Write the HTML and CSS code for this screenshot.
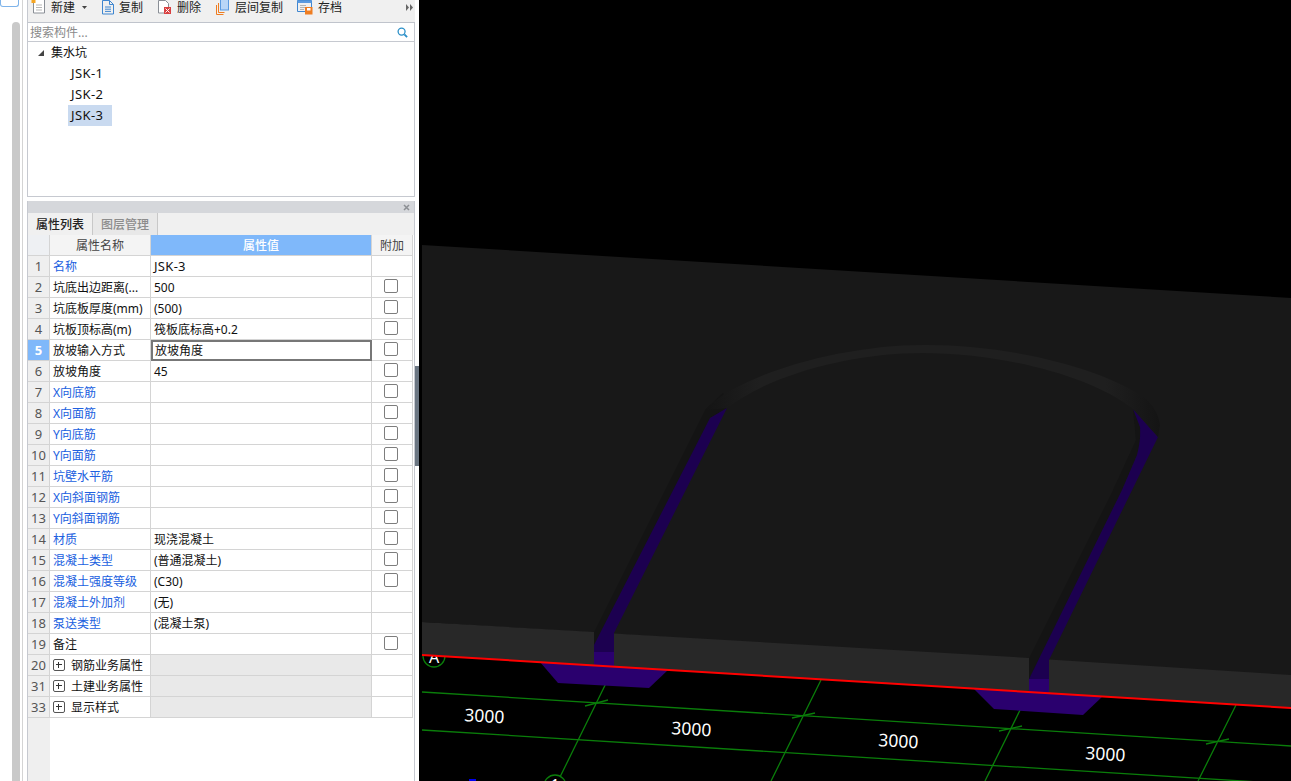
FILE: index.html
```html
<!DOCTYPE html>
<html lang="zh">
<head>
<meta charset="utf-8">
<title>集水坑</title>
<link rel="stylesheet" href="styles.css">
</head>
<body>
<div class="app">
  <aside class="strip">
    <div class="strip-inner">
      <div class="strip-btn"></div>
      <div class="strip-thumb"></div>
    </div>
  </aside>
  <section class="side">
    <div class="toolbar">
      <div class="tool tool-new">
        <svg class="ico" viewBox="0 0 16 16"><path class="s-gray" d="M2.500 -2h9l2 2v13h-11z"/><path class="s-lgray" d="M5 5h6M5 7.500h6M5 10h6"/><rect class="f-orange" x="0.500" y="-1" width="4" height="4"/></svg>
        <span>新建</span>
        <svg class="caret" viewBox="0 0 5 3"><path class="f-dark" d="M0 0h5L2.500 3z"/></svg>
      </div>
      <div class="tool tool-copy">
        <svg class="ico" viewBox="0 0 16 16"><path class="s-blue" d="M2.500 0.500h7l4 4v9.500h-11z"/><path class="s-blue" d="M9.500 0.500v4h4M5 7h6M5 9.200h6M5 11.400h6"/></svg>
        <span>复制</span>
      </div>
      <div class="tool tool-del">
        <svg class="ico" viewBox="0 0 16 16"><path class="s-gray" d="M2.500 0.500h7l3 3v9.500h-10z"/><rect class="f-red" x="8" y="7" width="7" height="7"/><path class="s-white" d="M9.500 8.500l4 4M13.500 8.500l-4 4"/></svg>
        <span>删除</span>
      </div>
      <div class="tool tool-floor">
        <svg class="ico" viewBox="0 0 16 16"><path class="s-orange" d="M2.500 5v9.500h7M4.500 3v9.500h6"/><rect class="f-lblue" x="6.500" y="-2" width="8" height="12"/></svg>
        <span>层间复制</span>
      </div>
      <div class="tool tool-save">
        <svg class="ico" viewBox="0 0 16 16"><path class="s-blue" d="M0.500 0.500h14v11h-14z"/><rect class="f-blue" x="0.500" y="0.500" width="14" height="2.500"/><path class="s-lgray" d="M3 5.500h6M3 7.500h6M3 9.500h4"/><rect class="f-orange2" x="8" y="7" width="7.500" height="7.500"/><rect class="f-white" x="10" y="8" width="3.500" height="2.500"/></svg>
        <span>存档</span>
      </div>
      <svg class="more" viewBox="0 0 7 7"><path class="f-grayd" d="M0 0l3 3.500L0 7zM4 0l3 3.500L4 7z"/></svg>
    </div>
    <div class="search">
      <span class="search-text">搜索构件...</span>
      <svg class="search-ico" viewBox="0 0 12 12"><circle class="s-cyan" cx="5" cy="5" r="3.800"/><path class="s-cyan2" d="M8 8l3 3"/></svg>
    </div>
    <div class="tree">
      <div class="tree-row tree-root"><svg class="tri" viewBox="0 0 6 6"><path class="f-dark" d="M6 0v6H0z"/></svg><span>集水坑</span></div>
      <div class="tree-row tree-leaf"><span class="leaf">JSK-1</span></div>
      <div class="tree-row tree-leaf"><span class="leaf">JSK-2</span></div>
      <div class="tree-row tree-leaf"><span class="leaf leaf-sel">JSK-3</span></div>
    </div>
    <div class="props">
      <div class="props-head"><svg class="close" viewBox="0 0 7 7"><path class="s-x" d="M1 1l5 5M6 1l-5 5"/></svg></div>
      <div class="tabs">
        <div class="tab tab-on">属性列表</div>
        <div class="tab tab-off">图层管理</div>
      </div>
      <div class="grid-wrap">
        <table class="grid">
          <colgroup><col class="c-num"><col class="c-name"><col class="c-val"><col class="c-add"></colgroup>
          <thead>
            <tr><th class="num"></th><th class="th-name">属性名称</th><th class="th-val">属性值</th><th class="th-add">附加</th></tr>
          </thead>
          <tbody>
            <tr><td class="num">1</td><td class="name link">名称</td><td class="val latin">JSK-3</td><td class="add"></td></tr>
            <tr><td class="num">2</td><td class="name">坑底出边距离(...</td><td class="val">500</td><td class="add"><span class="chk"></span></td></tr>
            <tr><td class="num">3</td><td class="name">坑底板厚度(mm)</td><td class="val">(500)</td><td class="add"><span class="chk"></span></td></tr>
            <tr><td class="num">4</td><td class="name">坑板顶标高(m)</td><td class="val">筏板底标高+0.2</td><td class="add"><span class="chk"></span></td></tr>
            <tr><td class="num num-sel">5</td><td class="name">放坡输入方式</td><td class="val val-sel">放坡角度</td><td class="add"><span class="chk"></span></td></tr>
            <tr><td class="num">6</td><td class="name">放坡角度</td><td class="val">45</td><td class="add"><span class="chk"></span></td></tr>
            <tr><td class="num">7</td><td class="name link">X向底筋</td><td class="val"></td><td class="add"><span class="chk"></span></td></tr>
            <tr><td class="num">8</td><td class="name link">X向面筋</td><td class="val"></td><td class="add"><span class="chk"></span></td></tr>
            <tr><td class="num">9</td><td class="name link">Y向底筋</td><td class="val"></td><td class="add"><span class="chk"></span></td></tr>
            <tr><td class="num">10</td><td class="name link">Y向面筋</td><td class="val"></td><td class="add"><span class="chk"></span></td></tr>
            <tr><td class="num">11</td><td class="name link">坑壁水平筋</td><td class="val"></td><td class="add"><span class="chk"></span></td></tr>
            <tr><td class="num">12</td><td class="name link">X向斜面钢筋</td><td class="val"></td><td class="add"><span class="chk"></span></td></tr>
            <tr><td class="num">13</td><td class="name link">Y向斜面钢筋</td><td class="val"></td><td class="add"><span class="chk"></span></td></tr>
            <tr><td class="num">14</td><td class="name link">材质</td><td class="val">现浇混凝土</td><td class="add"><span class="chk"></span></td></tr>
            <tr><td class="num">15</td><td class="name link">混凝土类型</td><td class="val">(普通混凝土)</td><td class="add"><span class="chk"></span></td></tr>
            <tr><td class="num">16</td><td class="name link">混凝土强度等级</td><td class="val">(C30)</td><td class="add"><span class="chk"></span></td></tr>
            <tr><td class="num">17</td><td class="name link">混凝土外加剂</td><td class="val">(无)</td><td class="add"></td></tr>
            <tr><td class="num">18</td><td class="name link">泵送类型</td><td class="val">(混凝土泵)</td><td class="add"></td></tr>
            <tr><td class="num">19</td><td class="name">备注</td><td class="val"></td><td class="add"><span class="chk"></span></td></tr>
            <tr><td class="num">20</td><td class="name group"><span class="plus"></span>钢筋业务属性</td><td class="val val-group"></td><td class="add"></td></tr>
            <tr><td class="num">31</td><td class="name group"><span class="plus"></span>土建业务属性</td><td class="val val-group"></td><td class="add"></td></tr>
            <tr><td class="num">33</td><td class="name group"><span class="plus"></span>显示样式</td><td class="val val-group"></td><td class="add"></td></tr>
          </tbody>
        </table>
      </div>
    </div>
  </section>
  <div class="splitter"><div class="grip"></div></div>
  <main class="view">
    <svg class="scene" viewBox="419 0 872 781">
      <defs>
        <linearGradient id="rimFade" gradientUnits="userSpaceOnUse" x1="705" y1="0" x2="1160" y2="0">
          <stop class="rim-end" offset="0"/>
          <stop class="rim-mid" offset="0.120"/>
          <stop class="rim-mid" offset="0.880"/>
          <stop class="rim-end" offset="1"/>
        </linearGradient>
      </defs>
      <path class="g-line" d="M422 692L1291 746M422 730L1291 784M614 667L560 777M821 680L771 781M1029 692L985 781M1236 705L1198 781"/>
      <path class="g-line" d="M585 706L608 700M792 718L815 713M999 731L1022 726M1206 744L1229 739"/>
      <circle class="g-circ" cx="434" cy="656" r="11"/>
      <circle class="g-circ" cx="555" cy="786" r="11"/>
      <text class="axis" x="434" y="663">A</text>
      <text class="axis" x="555" y="791">1</text>
      <rect class="blue-mark" x="469" y="779" width="7" height="2"/>
      <path class="bright" d="M540 662L558 683L649 688L668 670z"/>
      <path class="bright" d="M974 689L994 709L1083 715L1103 696z"/>
      <path class="top" d="M422 245L1291 298V676L422 622z"/>
      <path class="front" d="M422 622L594 632V666L422 655z"/>
      <path class="front" d="M614 633.500L1029 658V692L614 667z"/>
      <path class="front" d="M1049 659.500L1291 675V708L1049 693z"/>
      <path class="wall" d="M594 632V653L710 418L727 408L723 393L705 410z"/>
      <path class="dim" d="M594 652H614V633L727 408L710 418L594 645z"/>
      <path class="bright" d="M594 652H614V667L594 666z"/>
      <path class="wall" d="M1029 658V680L1122 490L1137 455Q1141 440 1140 427L1133 409L1136 440L1113 490z"/>
      <path class="dim" d="M1029 679H1049V660L1158 437L1133 409L1140 427Q1141 440 1137 455L1122 490z"/>
      <path class="bright" d="M1029 679H1049V693L1029 692z"/>
      <path class="rim" d="M705 410C730 380 830 345 925 345C1020 345 1110 372 1146 399Q1158 410 1160 425L1158 437L1133 409C1090 375 1000 353 923 353C850 353 770 375 727 408z"/>
      <path class="red" d="M422 655L1291 708"/>
      <text class="dim-text" transform="translate(464 721) rotate(3.500)">3000</text>
      <text class="dim-text" transform="translate(671 734) rotate(3.500)">3000</text>
      <text class="dim-text" transform="translate(878 746) rotate(3.500)">3000</text>
      <text class="dim-text" transform="translate(1085 759) rotate(3.500)">3000</text>
    </svg>
  </main>
</div>
</body>
</html>
```

FILE: styles.css
```css
* { box-sizing: border-box; }
html, body { margin: 0; height: 100%; background: #fff; overflow: hidden; }
body { font: 12px/1 "Noto Sans", "Noto Sans CJK SC", sans-serif; color: #111; }
.app { display: flex; width: 1291px; height: 781px; overflow: hidden; }

.strip { width: 27px; flex: none; padding-right: 4px; }
.strip-inner { height: 100%; border-right: 1px solid #d4d4d4; display: flex; flex-direction: column; }
.strip-btn { width: 19px; height: 7px; border: 1px solid #7fb4ea; border-top: 0; border-radius: 0 0 3px 3px; }
.strip-thumb { width: 8px; flex: 1; margin: 15px 0 0 12px; background: #c9c9c9; border-radius: 4px 4px 0 0; }

.side { width: 388px; flex: none; display: flex; flex-direction: column; }

.toolbar { height: 23px; flex: none; display: flex; align-items: flex-start; background: #f0f0f0; border-left: 1px solid #c6c9d0; border-bottom: 1px solid #c0c4cc; padding-left: 3px; color: #222; overflow: hidden; }
.tool { display: flex; align-items: center; height: 15px; margin-right: 13px; white-space: nowrap; }
.tool span { display: block; }
.ico { width: 16px; height: 16px; flex: none; margin-right: 5px; overflow: visible; }
.tool-new .ico { margin-right: 4px; }
.tool-copy .ico { margin-right: 3px; }
.tool-floor { margin-right: 14px; }
.caret { width: 5px; height: 3px; margin-left: 7px; }
.more { width: 7px; height: 7px; margin: 4px 2px 0 auto; }

.s-gray, .s-lgray, .s-blue, .s-white, .s-orange, .s-cyan, .s-cyan2, .s-x { fill: none; stroke-width: 1; }
.s-gray { stroke: #8a8f96; fill: #fff; }
.s-lgray { stroke: #b5b5b5; }
.s-blue { stroke: #3f86d0; }
.s-white { stroke: #fff; }
.s-orange { stroke: #ee7d22; }
.s-cyan { stroke: #2a8fc8; stroke-width: 1.400; }
.s-cyan2 { stroke: #2a8fc8; stroke-width: 2; }
.s-x { stroke: #8c8f94; stroke-width: 1.500; }
.f-orange { fill: #f5a623; }
.f-orange2 { fill: #ee7d22; }
.f-red { fill: #d94040; }
.f-lblue { fill: #b9d6f7; stroke: #5b9ae0; stroke-width: 1; }
.f-blue { fill: #5b9ae0; }
.f-white { fill: #fff; }
.f-dark { fill: #444; }
.f-grayd { fill: #666; }

.search { height: 19px; flex: none; display: flex; align-items: center; justify-content: space-between; padding: 1px 6px 0 2px; border-left: 1px solid #c6c9d0; border-right: 1px solid #c6c9d0; border-bottom: 1px solid #c6c9d0; }
.search-text { color: #8a8a8a; }
.search-ico { width: 11px; height: 11px; }

.tree { height: 155px; flex: none; border-left: 1px solid #c6c9d0; border-right: 1px solid #c6c9d0; border-bottom: 1px solid #c6c9d0; }
.tree-row { height: 21px; display: flex; align-items: center; }
.tree-root { padding-left: 10px; }
.tri { width: 6px; height: 6px; margin-right: 7px; }
.tree-leaf { padding-left: 40px; }
.leaf { display: flex; align-items: center; height: 21px; padding: 0 9px 0 3px; min-width: 44px; font-size: 13px; letter-spacing: 0.400px; }
.leaf-sel { background: #c9daf0; }

.props { flex: 1; margin-top: 4px; min-height: 0; display: flex; flex-direction: column; border-left: 1px solid #c6c9d0; border-right: 1px solid #c6c9d0; }
.props-head { height: 12px; flex: none; display: flex; justify-content: flex-end; align-items: center; padding-right: 4px; background: #d5d7db; }
.close { width: 7px; height: 7px; }
.tabs { height: 22px; flex: none; display: flex; background: #f0f0f0; }
.tab { display: flex; align-items: center; justify-content: center; padding-top: 1px; font-weight: 500; }
.tab-on { width: 65px; color: #222; border-right: 1px solid #c8c8c8; }
.tab-off { width: 65px; color: #8c8c8c; background: #e8e8e8; border-right: 1px solid #c8c8c8; }

.grid-wrap { flex: 1; min-height: 0; background: linear-gradient(to right, #efefef 22px, #fff 22px); }
.grid { table-layout: fixed; border-collapse: separate; border-spacing: 0; width: 385px; }
.c-num { width: 22px; }
.c-name { width: 101px; }
.c-val { width: 221px; }
.c-add { width: 41px; }
.grid th, .grid td { height: 21px; padding: 1px 0 0; border-right: 1px solid #d4d4d4; border-bottom: 1px solid #d4d4d4; font-weight: 400; white-space: nowrap; overflow: hidden; }
.grid th { background: #f4f4f4; color: #444; text-align: center; }
.grid th.th-val { background: #7fb8fa; color: #fff; font-weight: 500; }
.grid th.num { background: #eef0f3; }
.grid td.num { background: #efefef; text-align: center; color: #555; font-size: 13px; }
.grid td.num-sel { background: #7fb8fa; color: #fff; font-weight: 700; }
.grid td.name { padding-left: 3px; background: #fff; }
.grid td.link { color: #2060e0; }
.grid td.val { padding-left: 3px; background: #fff; }
.grid td.latin { font-size: 13px; letter-spacing: 0.300px; }
.grid td.val-sel { border: 2px solid #777; padding-left: 2px; }
.grid td.val-group { background: #e9e9e9; }
.grid td.add { padding: 0; text-align: center; background: #fff; }
.chk { display: block; width: 14px; height: 14px; margin: 0 0 2px 12px; border: 1px solid #7d7d7d; border-radius: 2px; background: #fff; }
.plus { display: inline-block; position: relative; width: 12px; height: 12px; margin-right: 6px; vertical-align: -1px; border: 1px solid #555; border-radius: 2px; }
.plus::before { content: ""; position: absolute; left: 2px; top: 4px; width: 6px; height: 1px; background: #333; }
.plus::after { content: ""; position: absolute; left: 4px; top: 2px; width: 1px; height: 6px; background: #333; }

.splitter { width: 4px; flex: none; display: flex; align-items: flex-start; }
.grip { width: 4px; height: 100px; margin-top: 366px; background: #6b7682; }

.view { flex: 1; background: #000; min-width: 0; }
.scene { display: block; width: 872px; height: 781px; }
.top { fill: #181818; }
.front { fill: #282828; }
.wall { fill: #141414; }
.rim { fill: url(#rimFade); }
.rim-mid { stop-color: #1f1f1f; }
.rim-end { stop-color: #141414; }
.dim { fill: #1c0050; }
.bright { fill: #2a006e; }
.red { stroke: #f00; stroke-width: 2; fill: none; }
.g-line { stroke: #0a7d0a; stroke-width: 1.300; fill: none; }
.g-circ { stroke: #0a7d0a; stroke-width: 1.300; fill: #000; }
.axis { fill: #fff; font: 16px "Noto Sans", sans-serif; text-anchor: middle; }
.blue-mark { fill: #0000f0; }
.dim-text { fill: #fff; font: 17.500px "Noto Sans", sans-serif; }
```
